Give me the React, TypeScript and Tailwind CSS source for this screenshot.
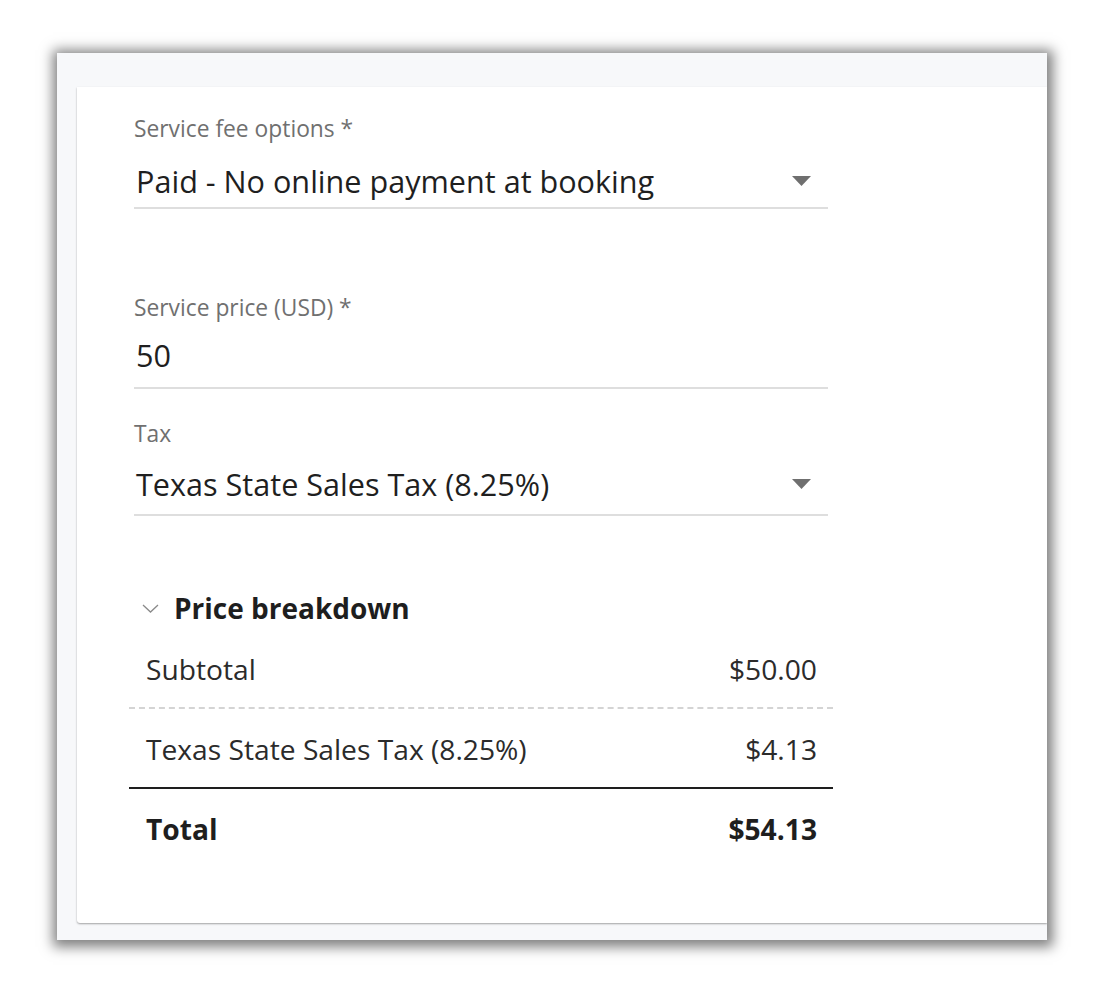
import React from "react";

const font = { fontFamily: '"Open Sans", "Noto Sans", sans-serif' };

const Caret = () => (
  <svg width="19" height="10" viewBox="0 0 19 10" className="shrink-0">
    <path d="M0 0 L19 0 L9.5 10 Z" fill="#6f6f6f" />
  </svg>
);

interface FieldProps {
  label: string;
  value: string;
  select?: boolean;
  className?: string;
  valueGap: string;
  bottomPad: string;
}

const Field = ({ label, value, select, className, valueGap, bottomPad }: FieldProps) => (
  <div className={className}>
    <div className="text-[22.8px] leading-[30px] text-[#707070]">{label}</div>
    <div
      className={`flex items-center justify-between border-b-2 border-[#dedede] pl-[2px] pr-[17px] ${valueGap} ${bottomPad}`}
    >
      <span className="text-[30.6px] leading-[42px] text-[#1f1f1f]">{value}</span>
      {select && <Caret />}
    </div>
  </div>
);

const Row = ({ label, amount, bold, border }: { label: string; amount: string; bold?: boolean; border?: string }) => (
  <div className={`flex items-center justify-between pl-[17px] pr-4 pt-[21px] pb-[19px] ${border ?? ""}`}>
    <span className={`text-[28.2px] leading-[38px] ${bold ? "font-bold text-[#1e1e1e]" : "text-[#2b2b2b]"}`}>{label}</span>
    <span className={`text-[28.2px] leading-[38px] ${bold ? "font-bold text-[#1e1e1e]" : "text-[#2b2b2b]"}`}>{amount}</span>
  </div>
);

export default function App() {
  return (
    <div className="min-h-[994px] w-full bg-white pl-[57px] pt-[53px]" style={font}>
      <div className="flex h-[887px] w-[990px] flex-col overflow-hidden bg-[#f7f8fa] pl-[20px] pt-[34px] pb-[17px] shadow-[1px_2px_12px_5px_rgba(0,0,0,0.5)]">
        <div className="flex-1 rounded-bl-[3px] bg-white pl-[57px] pt-[27px] shadow-[0_1px_2px_rgba(0,0,0,0.35)]">
          <div className="w-[694px]">
            <Field
              label="Service fee options *"
              value="Paid - No online payment at booking"
              select
              valueGap="mt-[16px]"
              bottomPad="pb-[5px]"
            />
            <Field
              label="Service price (USD) *"
              value="50"
              className="mt-[84px]"
              valueGap="mt-[11px]"
              bottomPad="pb-[11px]"
            />
            <Field
              label="Tax"
              value="Texas State Sales Tax (8.25%)"
              select
              className="mt-[30px]"
              valueGap="mt-[14px]"
              bottomPad="pb-[9px]"
            />
          </div>

          {/* price breakdown sits slightly wider than the fields */}
          <div className="ml-[-5px] mt-[73px] w-[704px]">
            <div className="flex items-center gap-[15px] pl-[13px]">
              <svg width="17" height="9" viewBox="0 0 17 9" className="shrink-0">
                <path d="M1 1 L8.5 8 L16 1" fill="none" stroke="#8a8a8a" strokeWidth="1.3" />
              </svg>
              <span className="text-[28px] font-bold leading-[38px] text-[#1e1e1e]">Price breakdown</span>
            </div>
            <div className="mt-[2px]">
              <Row label="Subtotal" amount="$50.00" border="border-b-2 border-dashed border-[#d4d4d4]" />
              <Row label="Texas State Sales Tax (8.25%)" amount="$4.13" border="border-b-2 border-[#1e1e1e]" />
              <Row label="Total" amount="$54.13" bold />
            </div>
          </div>
        </div>
      </div>
    </div>
  );
}
